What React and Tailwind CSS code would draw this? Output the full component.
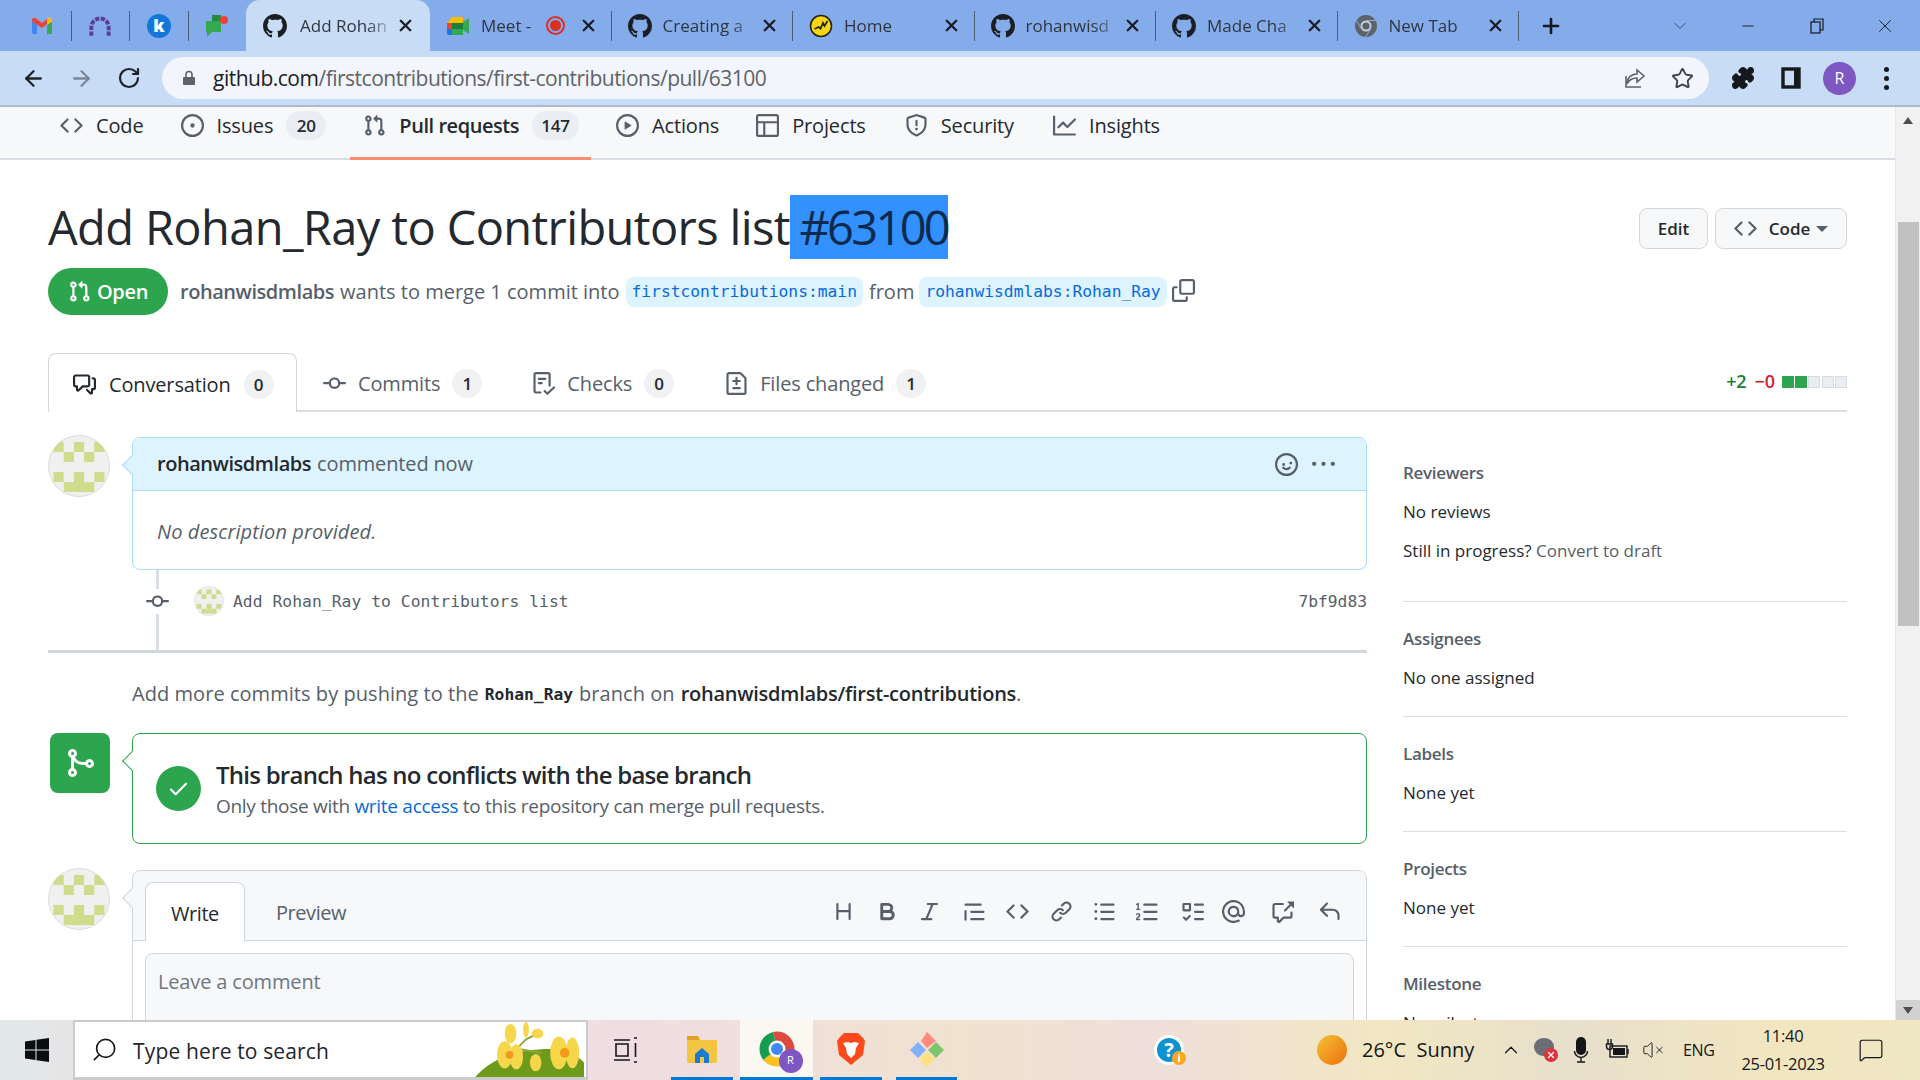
import { ArrowLeft, ArrowRight, RotateCw, Star, X, Plus, Minus, ChevronDown, ChevronUp, Search, Puzzle, VolumeX, MessageSquare } from "lucide-react";

const sans = "font-['Open_Sans',sans-serif]";
const mono = "font-['DejaVu_Sans_Mono',monospace]";

// octicon paths
const ICONS = {
  code: "m11.28 3.22 4.25 4.25a.75.75 0 0 1 0 1.06l-4.25 4.25a.749.749 0 0 1-1.275-.326.749.749 0 0 1 .215-.734L13.94 8l-3.72-3.72a.749.749 0 0 1 .326-1.275.749.749 0 0 1 .734.215Zm-6.56 0a.751.751 0 0 1 1.042.018.751.751 0 0 1 .018 1.042L2.06 8l3.72 3.72a.749.749 0 0 1-.326 1.275.749.749 0 0 1-.734-.215L.47 8.53a.75.75 0 0 1 0-1.06Z",
  issue: "M8 9.5a1.5 1.5 0 1 0 0-3 1.5 1.5 0 0 0 0 3Z M8 0a8 8 0 1 1 0 16A8 8 0 0 1 8 0ZM1.5 8a6.5 6.5 0 1 0 13 0 6.5 6.5 0 0 0-13 0Z",
  pr: "M1.5 3.25a2.25 2.25 0 1 1 3 2.122v5.256a2.251 2.251 0 1 1-1.5 0V5.372A2.25 2.25 0 0 1 1.5 3.25Zm5.677-.177L9.573.677A.25.25 0 0 1 10 .854V2.5h1A2.5 2.5 0 0 1 13.5 5v5.628a2.251 2.251 0 1 1-1.5 0V5a1 1 0 0 0-1-1h-1v1.646a.25.25 0 0 1-.427.177L7.177 3.427a.25.25 0 0 1 0-.354ZM3.75 2.5a.75.75 0 1 0 0 1.5.75.75 0 0 0 0-1.5Zm0 9.5a.75.75 0 1 0 0 1.5.75.75 0 0 0 0-1.5Zm8.25.75a.75.75 0 1 0 1.5 0 .75.75 0 0 0-1.5 0Z",
  play: "M8 0a8 8 0 1 1 0 16A8 8 0 0 1 8 0ZM1.5 8a6.5 6.5 0 1 0 13 0 6.5 6.5 0 0 0-13 0Zm4.879-2.773 4.264 2.559a.25.25 0 0 1 0 .428l-4.264 2.559A.25.25 0 0 1 6 10.559V5.442a.25.25 0 0 1 .379-.215Z",
  table: "M0 1.75C0 .784.784 0 1.75 0h12.5C15.216 0 16 .784 16 1.75v12.5A1.75 1.75 0 0 1 14.25 16H1.75A1.75 1.75 0 0 1 0 14.25ZM6.5 6.5v8h7.75a.25.25 0 0 0 .25-.25V6.5Zm8-1.5V1.75a.25.25 0 0 0-.25-.25H1.75a.25.25 0 0 0-.25.25V5Zm-13 1.5v7.75c0 .138.112.25.25.25H5v-8Z",
  shield: "M7.467.133a1.748 1.748 0 0 1 1.066 0l5.25 1.68A1.75 1.75 0 0 1 15 3.48V7c0 1.566-.32 3.182-1.303 4.682-.983 1.498-2.585 2.813-5.032 3.855a1.697 1.697 0 0 1-1.33 0c-2.447-1.042-4.049-2.357-5.032-3.855C1.32 10.182 1 8.566 1 7V3.48a1.75 1.75 0 0 1 1.217-1.667Zm.61 1.429a.25.25 0 0 0-.153 0l-5.25 1.68a.25.25 0 0 0-.174.238V7c0 1.358.275 2.666 1.057 3.86.784 1.194 2.121 2.34 4.366 3.297a.196.196 0 0 0 .154 0c2.245-.956 3.582-2.104 4.366-3.298C13.225 9.666 13.5 8.36 13.5 7V3.48a.251.251 0 0 0-.174-.237l-5.25-1.68ZM8.75 4.75v3a.75.75 0 0 1-1.5 0v-3a.75.75 0 0 1 1.5 0ZM9 10.5a1 1 0 1 1-2 0 1 1 0 0 1 2 0Z",
  graph: "M1.5 1.75V13.5h13.75a.75.75 0 0 1 0 1.5H.75a.75.75 0 0 1-.75-.75V1.75a.75.75 0 0 1 1.5 0Zm14.28 2.53-5.25 5.25a.75.75 0 0 1-1.06 0L7 7.06 4.28 9.78a.751.751 0 0 1-1.042-.018.751.751 0 0 1-.018-1.042l3.25-3.25a.75.75 0 0 1 1.06 0L10 7.94l4.72-4.72a.751.751 0 0 1 1.042.018.751.751 0 0 1 .018 1.042Z",
  discussion: "M1.75 1h8.5c.966 0 1.75.784 1.75 1.75v5.5A1.75 1.75 0 0 1 10.25 10H7.061l-2.574 2.573A1.458 1.458 0 0 1 2 11.543V10h-.25A1.75 1.75 0 0 1 0 8.25v-5.5C0 1.784.784 1 1.75 1ZM1.5 2.75v5.5c0 .138.112.25.25.25h1a.75.75 0 0 1 .75.75v2.19l2.72-2.72a.749.749 0 0 1 .53-.22h3.5a.25.25 0 0 0 .25-.25v-5.5a.25.25 0 0 0-.25-.25h-8.5a.25.25 0 0 0-.25.25Zm13 2a.25.25 0 0 0-.25-.25h-.5a.75.75 0 0 1 0-1.5h.5c.966 0 1.75.784 1.75 1.75v5.5A1.75 1.75 0 0 1 14.25 12H14v1.543a1.458 1.458 0 0 1-2.487 1.03L9.22 12.28a.749.749 0 0 1 .326-1.275.749.749 0 0 1 .734.215l2.22 2.22v-2.19a.75.75 0 0 1 .75-.75h1a.25.25 0 0 0 .25-.25Z",
  commit: "M11.93 8.5a4.002 4.002 0 0 1-7.86 0H.75a.75.75 0 0 1 0-1.5h3.32a4.002 4.002 0 0 1 7.86 0h3.32a.75.75 0 0 1 0 1.5Zm-1.43-.75a2.5 2.5 0 1 0-5 0 2.5 2.5 0 0 0 5 0Z",
  checklist: "M2.5 1.75v11.5c0 .138.112.25.25.25h3.17a.75.75 0 0 1 0 1.5H2.75A1.75 1.75 0 0 1 1 13.25V1.75C1 .784 1.784 0 2.75 0h8.5C12.216 0 13 .784 13 1.75v7.736a.75.75 0 0 1-1.5 0V1.75a.25.25 0 0 0-.25-.25h-8.5a.25.25 0 0 0-.25.25Zm13.274 9.537v-.001l-4.557 4.45a.75.75 0 0 1-1.055-.008l-1.943-1.95a.75.75 0 0 1 1.062-1.058l1.419 1.425 4.026-3.932a.75.75 0 1 1 1.048 1.074ZM4.75 4h4.5a.75.75 0 0 1 0 1.5h-4.5a.75.75 0 0 1 0-1.5ZM4 7.75A.75.75 0 0 1 4.75 7h2a.75.75 0 0 1 0 1.5h-2A.75.75 0 0 1 4 7.75Z",
  fileDiff: "M1 1.75C1 .784 1.784 0 2.75 0h7.586c.464 0 .909.184 1.237.513l2.914 2.914c.329.328.513.773.513 1.237v9.586A1.75 1.75 0 0 1 13.25 16H2.75A1.75 1.75 0 0 1 1 14.25Zm1.75-.25a.25.25 0 0 0-.25.25v12.5c0 .138.112.25.25.25h10.5a.25.25 0 0 0 .25-.25V4.664a.25.25 0 0 0-.073-.177l-2.914-2.914a.25.25 0 0 0-.177-.073ZM8 3.25a.75.75 0 0 1 .75.75v1.5h1.5a.75.75 0 0 1 0 1.5h-1.5v1.5a.75.75 0 0 1-1.5 0V7h-1.5a.75.75 0 0 1 0-1.5h1.5V4A.75.75 0 0 1 8 3.25Zm-3 8a.75.75 0 0 1 .75-.75h4.5a.75.75 0 0 1 0 1.5h-4.5a.75.75 0 0 1-.75-.75Z",
  copy: "M0 6.75C0 5.784.784 5 1.75 5h1.5a.75.75 0 0 1 0 1.5h-1.5a.25.25 0 0 0-.25.25v7.5c0 .138.112.25.25.25h7.5a.25.25 0 0 0 .25-.25v-1.5a.75.75 0 0 1 1.5 0v1.5A1.75 1.75 0 0 1 9.25 16h-7.5A1.75 1.75 0 0 1 0 14.25Z M5 1.75C5 .784 5.784 0 6.75 0h7.5C15.216 0 16 .784 16 1.75v7.5A1.75 1.75 0 0 1 14.25 11h-7.5A1.75 1.75 0 0 1 5 9.25Zm1.75-.25a.25.25 0 0 0-.25.25v7.5c0 .138.112.25.25.25h7.5a.25.25 0 0 0 .25-.25v-7.5a.25.25 0 0 0-.25-.25Z",
  merge: "M5.45 5.154A4.25 4.25 0 0 0 9.25 7.5h1.378a2.251 2.251 0 1 1 0 1.5H9.25A5.734 5.734 0 0 1 5 7.123v3.505a2.25 2.25 0 1 1-1.5 0V5.372a2.25 2.25 0 1 1 1.95-.218ZM4.25 13.5a.75.75 0 1 0 0-1.5.75.75 0 0 0 0 1.5Zm8.5-4.5a.75.75 0 1 0 0-1.5.75.75 0 0 0 0 1.5ZM5 3.25a.75.75 0 1 0 0 .005V3.25Z",
  check: "M13.78 4.22a.75.75 0 0 1 0 1.06l-7.25 7.25a.75.75 0 0 1-1.06 0L2.22 9.28a.751.751 0 0 1 .018-1.042.751.751 0 0 1 1.042-.018L6 10.94l6.72-6.72a.75.75 0 0 1 1.06 0Z",
  smiley: "M8 0a8 8 0 1 1 0 16A8 8 0 0 1 8 0ZM1.5 8a6.5 6.5 0 1 0 13 0 6.5 6.5 0 0 0-13 0Zm3.82 1.636a.75.75 0 0 1 1.038.175l.007.009c.103.118.22.222.35.31.264.178.683.37 1.285.37.602 0 1.02-.192 1.285-.371.13-.088.247-.192.35-.31l.007-.008a.75.75 0 0 1 1.222.87l-.614-.431c.614.43.614.431.613.431v.001l-.001.002-.002.003-.005.007-.014.019a2.066 2.066 0 0 1-.184.213c-.16.166-.338.316-.53.445-.63.418-1.37.638-2.127.629-.946 0-1.652-.308-2.126-.63a3.331 3.331 0 0 1-.715-.657l-.014-.02-.005-.006-.002-.003v-.002h-.001l.613-.432-.614.43a.75.75 0 0 1 .183-1.044ZM12 7a1 1 0 1 1-2 0 1 1 0 0 1 2 0ZM5 8a1 1 0 1 1 2 0 1 1 0 0 1-2 0Z",
  kebab: "M8 9a1.5 1.5 0 1 0 0-3 1.5 1.5 0 0 0 0 3ZM1.5 9a1.5 1.5 0 1 0 0-3 1.5 1.5 0 0 0 0 3Zm13 0a1.5 1.5 0 1 0 0-3 1.5 1.5 0 0 0 0 3Z",
  github: "M8 0c4.42 0 8 3.58 8 8a8.013 8.013 0 0 1-5.45 7.59c-.4.08-.55-.17-.55-.38 0-.27.01-1.13.01-2.2 0-.75-.25-1.23-.54-1.48 1.78-.2 3.65-.88 3.65-3.95 0-.88-.31-1.59-.82-2.15.08-.2.36-1.02-.08-2.12 0 0-.67-.22-2.2.82-.64-.18-1.32-.27-2-.27-.68 0-1.36.09-2 .27-1.53-1.03-2.2-.82-2.2-.82-.44 1.1-.16 1.92-.08 2.12-.51.56-.82 1.28-.82 2.15 0 3.06 1.86 3.75 3.64 3.95-.23.2-.44.55-.51 1.07-.46.21-1.61.55-2.33-.66-.15-.24-.6-.83-1.23-.82-.67.01-.27.38.01.53.34.19.73.9.82 1.13.16.45.68 1.31 2.69.94 0 .67.01 1.3.01 1.49 0 .21-.15.45-.55.38A7.995 7.995 0 0 1 0 8c0-4.42 3.58-8 8-8Z",
  heading: "M3.75 2a.75.75 0 0 1 .75.75V7h7V2.75a.75.75 0 0 1 1.5 0v10.5a.75.75 0 0 1-1.5 0V8.5h-7v4.75a.75.75 0 0 1-1.5 0V2.75A.75.75 0 0 1 3.75 2Z",
  bold: "M4 2h4.5a3.501 3.501 0 0 1 2.852 5.53A3.499 3.499 0 0 1 9.5 14H4a1 1 0 0 1-1-1V3a1 1 0 0 1 1-1Zm1 7v3h4.5a1.5 1.5 0 0 0 0-3Zm3.5-2a1.5 1.5 0 0 0 0-3H5v3Z",
  italic: "M6 2.75A.75.75 0 0 1 6.75 2h6.5a.75.75 0 0 1 0 1.5h-2.505l-3.858 9H9.25a.75.75 0 0 1 0 1.5h-6.5a.75.75 0 0 1 0-1.5h2.505l3.858-9H6.75A.75.75 0 0 1 6 2.75Z",
  quote: "M1.75 2.5h10.5a.75.75 0 0 1 0 1.5H1.75a.75.75 0 0 1 0-1.5Zm4 5h8.5a.75.75 0 0 1 0 1.5h-8.5a.75.75 0 0 1 0-1.5Zm0 5h8.5a.75.75 0 0 1 0 1.5h-8.5a.75.75 0 0 1 0-1.5ZM2.5 7.75v6a.75.75 0 0 1-1.5 0v-6a.75.75 0 0 1 1.5 0Z",
  link: "m7.775 3.275 1.25-1.25a3.5 3.5 0 1 1 4.95 4.95l-2.5 2.5a3.5 3.5 0 0 1-4.95 0 .751.751 0 0 1 .018-1.042.751.751 0 0 1 1.042-.018 1.998 1.998 0 0 0 2.83 0l2.5-2.5a2.002 2.002 0 0 0-2.83-2.83l-1.25 1.25a.751.751 0 0 1-1.042-.018.751.751 0 0 1-.018-1.042Zm-4.69 9.64a1.998 1.998 0 0 0 2.83 0l1.25-1.25a.751.751 0 0 1 1.042.018.751.751 0 0 1 .018 1.042l-1.25 1.25a3.5 3.5 0 1 1-4.95-4.95l2.5-2.5a3.5 3.5 0 0 1 4.95 0 .751.751 0 0 1-.018 1.042.751.751 0 0 1-1.042.018 1.998 1.998 0 0 0-2.83 0l-2.5 2.5a1.998 1.998 0 0 0 0 2.83Z",
  ul: "M5.75 2.5h8.5a.75.75 0 0 1 0 1.5h-8.5a.75.75 0 0 1 0-1.5Zm0 5h8.5a.75.75 0 0 1 0 1.5h-8.5a.75.75 0 0 1 0-1.5Zm0 5h8.5a.75.75 0 0 1 0 1.5h-8.5a.75.75 0 0 1 0-1.5ZM2 14a1 1 0 1 1 0-2 1 1 0 0 1 0 2Zm1-6a1 1 0 1 1-2 0 1 1 0 0 1 2 0ZM2 4a1 1 0 1 1 0-2 1 1 0 0 1 0 2Z",
  ol: "M5 3.25a.75.75 0 0 1 .75-.75h8.5a.75.75 0 0 1 0 1.5h-8.5A.75.75 0 0 1 5 3.25Zm0 5a.75.75 0 0 1 .75-.75h8.5a.75.75 0 0 1 0 1.5h-8.5A.75.75 0 0 1 5 8.25Zm0 5a.75.75 0 0 1 .75-.75h8.5a.75.75 0 0 1 0 1.5h-8.5a.75.75 0 0 1-.75-.75ZM.924 10.32a.5.5 0 0 1-.851-.525l.001-.001.001-.002.002-.004.007-.011c.097-.144.215-.273.348-.384.228-.19.588-.392 1.068-.392.468 0 .858.181 1.126.484.259.294.377.673.377 1.038 0 .987-.686 1.495-1.156 1.845l-.047.035c-.303.225-.522.4-.654.597h1.357a.5.5 0 0 1 0 1H.5a.5.5 0 0 1-.5-.5c0-1.005.692-1.52 1.167-1.875l.035-.026c.531-.397.8-.64.8-1.078a.568.568 0 0 0-.128-.376C1.806 10.068 1.695 10 1.5 10a.658.658 0 0 0-.429.163.835.835 0 0 0-.144.153ZM2.003 2.5V6h.503a.5.5 0 0 1 0 1H.5a.5.5 0 0 1 0-1h.503V3.308l-.28.14a.5.5 0 0 1-.446-.895l1.003-.5a.5.5 0 0 1 .723.447Z",
  tasklist: "M2 2h4a1 1 0 0 1 1 1v4a1 1 0 0 1-1 1H2a1 1 0 0 1-1-1V3a1 1 0 0 1 1-1Zm4.655 8.595a.75.75 0 0 1 0 1.06L4.03 14.28a.75.75 0 0 1-1.06 0l-1.5-1.5a.749.749 0 0 1 .326-1.275.749.749 0 0 1 .734.215l.97.97 2.095-2.095a.75.75 0 0 1 1.06 0ZM9.75 2.5h5.5a.75.75 0 0 1 0 1.5h-5.5a.75.75 0 0 1 0-1.5Zm0 5h5.5a.75.75 0 0 1 0 1.5h-5.5a.75.75 0 0 1 0-1.5Zm0 5h5.5a.75.75 0 0 1 0 1.5h-5.5a.75.75 0 0 1 0-1.5Zm-7.25-9v3h3v-3Z",
  mention: "M4.75 2.37a6.501 6.501 0 0 0 6.5 11.26.75.75 0 0 1 .75 1.298A7.999 7.999 0 0 1 .989 4.148 8 8 0 0 1 16 7.75v1.5a2.75 2.75 0 0 1-5.072 1.475 3.999 3.999 0 0 1-6.65-4.19A4 4 0 0 1 12 8v1.25a1.25 1.25 0 0 0 2.5 0V7.867a6.5 6.5 0 0 0-9.75-5.496ZM10.5 8a2.5 2.5 0 1 0-5 0 2.5 2.5 0 0 0 5 0Z",
  crossRef: "M2.75 3.5a.25.25 0 0 0-.25.25v7.5c0 .138.112.25.25.25h2a.75.75 0 0 1 .75.75v2.19l2.72-2.72a.749.749 0 0 1 .53-.22h4.5a.25.25 0 0 0 .25-.25v-2.5a.75.75 0 0 1 1.5 0v2.5A1.75 1.75 0 0 1 13.25 13H9.06l-2.573 2.573A1.458 1.458 0 0 1 4 14.543V13H2.75A1.75 1.75 0 0 1 1 11.25v-7.5C1 2.784 1.784 2 2.75 2h5.5a.75.75 0 0 1 0 1.5ZM16 1.25v4.146a.25.25 0 0 1-.427.177L14.03 4.03l-3.75 3.75a.749.749 0 0 1-1.275-.326.749.749 0 0 1 .215-.734l3.75-3.75-1.543-1.543A.25.25 0 0 1 11.604 1h4.146a.25.25 0 0 1 .25.25Z",
  reply: "M6.78 1.97a.75.75 0 0 1 0 1.06L3.81 6h6.44A4.75 4.75 0 0 1 15 10.75v2.5a.75.75 0 0 1-1.5 0v-2.5a3.25 3.25 0 0 0-3.25-3.25H3.81l2.97 2.97a.749.749 0 0 1-.326 1.275.749.749 0 0 1-.734-.215L1.47 7.28a.75.75 0 0 1 0-1.06l4.25-4.25a.75.75 0 0 1 1.06 0Z",
};

const Oct = ({ name, className = "w-[23px] h-[23px] text-[#57606a]" }) => (
  <svg viewBox="0 0 16 16" fill="currentColor" className={`shrink-0 ${className}`}>
    <path d={ICONS[name]} />
  </svg>
);

// identicon avatar, the green squares come from one 5x5 pattern
const CELLS = [[0,0],[2,0],[4,0],[1,1],[3,1],[0,3],[2,3],[4,3],[1,4],[2,4],[3,4]];
const Avatar = ({ className }) => (
  <svg viewBox="0 0 62 62" className={`shrink-0 ${className}`}>
    <defs>
      <clipPath id="av"><circle cx="31" cy="31" r="30.5" /></clipPath>
    </defs>
    <circle cx="31" cy="31" r="30.5" fill="#f0f0f0" stroke="#dcdcdc" />
    <g clipPath="url(#av)" fill="#cfdc8b">
      {CELLS.map(([x, y]) => (
        <rect key={`${x}-${y}`} x={5.5 + x * 10.2} y={7 + y * 10} width="10.2" height="10" />
      ))}
    </g>
  </svg>
);

const GmailIcon = () => (
  <svg viewBox="0 0 24 24" className="w-[24px] h-[24px]">
    <path d="M2 20V7l5 4v9H3.5A1.5 1.5 0 0 1 2 18.5Z" fill="#4285f4" />
    <path d="M22 20V7l-5 4v9h3.5a1.5 1.5 0 0 0 1.5-1.5Z" fill="#34a853" />
    <path d="M2 7.5V6c0-2 2.2-3 3.8-1.8L12 9l6-4.8 1 4.2-7 5.6L2 7.5Z" fill="#ea4335" />
    <path d="M17 11V5l1.2-.9C19.8 3 22 4 22 6v1.5Z" fill="#fbbc04" />
  </svg>
);
const ArcIcon = () => (
  <svg viewBox="0 0 24 24" className="w-[26px] h-[26px]" fill="none" stroke="#5b3d99" strokeWidth="3.6">
    <path d="M4 21v-8a8 8 0 0 1 16 0v8" strokeDasharray="4 1.3" />
  </svg>
);
const KIcon = () => (
  <div className={`w-[24px] h-[24px] rounded-full bg-[#1277d8] flex items-center justify-center text-white text-[17px] font-extrabold leading-none ${sans}`}>k</div>
);
const ChatIcon = () => (
  <svg viewBox="0 0 24 24" className="w-[24px] h-[26px]">
    <path d="M1 7h15v11H7l-5 5v-5H1Z" fill="#34a853" />
    <path d="M7 1h9v6H7Z" fill="#1e8e3e" />
    <circle cx="19" cy="6" r="4" fill="#ea4335" />
  </svg>
);
const MeetIcon = () => (
  <svg viewBox="0 0 24 24" className="w-[24px] h-[24px]">
    <path d="M6 3h11v6H1Z" fill="#fbbc04" />
    <path d="M1 9h5v6H1Z" fill="#ea4335" />
    <path d="M1 15h5v6H3a2 2 0 0 1-2-2Z" fill="#1a73e8" />
    <path d="M6 15h11v6H6Z" fill="#34a853" />
    <path d="M17 8l6-4v16l-6-4Z" fill="#34a853" />
    <path d="M6 9h11v6H6Z" fill="#188038" />
  </svg>
);
const HomeIcon = () => (
  <svg viewBox="0 0 24 24" className="w-[24px] h-[24px]">
    <circle cx="12" cy="12" r="10.5" fill="#f7d810" stroke="#26221a" strokeWidth="1.6" />
    <path d="M5.5 15l4-2 2 1.5L14 9l1.5 3 3-5" fill="none" stroke="#26221a" strokeWidth="1.8" />
  </svg>
);
const ChromeGrey = () => (
  <svg viewBox="0 0 24 24" className="w-[24px] h-[24px]">
    <circle cx="12" cy="12" r="11" fill="#5f6368" />
    <circle cx="12" cy="12" r="5.5" fill="#c5d0e0" />
    <circle cx="12" cy="12" r="3.6" fill="#5f6368" />
    <path d="M12 6.500h10M7.200 14.700 2.500 6.500M16.800 14.700 11.500 23" stroke="#85acea" strokeWidth="1" />
  </svg>
);
const GhIcon = () => <Oct name="github" className="w-[24px] h-[24px] text-[#1b1f23]" />;

const Sep = () => <div className="w-px h-[30px] bg-[#4d5c75] shrink-0" />;

const Pinned = ({ children }) => (
  <>
    <div className="w-[57.5px] h-full flex items-center justify-center shrink-0">{children}</div>
    <Sep />
  </>
);

const Tab = ({ icon, title, extra }) => (
  <>
    <div className={`w-[180.5px] h-full flex items-center pl-[16px] pr-[13px] shrink-0 ${sans}`}>
      <div className="w-[24px] flex justify-center shrink-0">{icon}</div>
      <div className="ml-[11px] flex-1 whitespace-nowrap text-[17px] text-[#2f3540] [mask-image:linear-gradient(90deg,#000_75%,rgba(0,0,0,0.25))]">{title}</div>
      {extra}
      <X className="w-[19px] h-[19px] ml-[8px] text-[#1a1d24] shrink-0" strokeWidth={3} />
    </div>
    <Sep />
  </>
);

const TabStrip = () => (
  <div className="h-[51px] bg-[#85acea] flex items-center pl-[13px]">
    <Pinned><GmailIcon /></Pinned>
    <Pinned><ArcIcon /></Pinned>
    <Pinned><KIcon /></Pinned>
    <div className="w-[57.5px] h-full flex items-center justify-center shrink-0"><ChatIcon /></div>
    <div className={`w-[184px] h-full bg-[#c9dcf6] rounded-t-[14px] flex items-center pl-[17px] pr-[15px] shrink-0 ${sans}`}>
      <GhIcon />
      <div className="ml-[13px] flex-1 whitespace-nowrap text-[17px] text-[#2f3540] [mask-image:linear-gradient(90deg,#000_75%,rgba(0,0,0,0.25))]">Add Rohan</div>
      <X className="w-[19px] h-[19px] ml-[8px] text-[#1a1d24] shrink-0" strokeWidth={3} />
    </div>
    <Tab
      icon={<MeetIcon />}
      title="Meet -"
      extra={<div className="w-[19px] h-[19px] rounded-full border-2 border-[#d93025] flex items-center justify-center shrink-0 mr-[6px]"><div className="w-[11px] h-[11px] rounded-full bg-[#d93025]" /></div>}
    />
    <Tab icon={<GhIcon />} title="Creating a" />
    <Tab icon={<HomeIcon />} title="Home" />
    <Tab icon={<GhIcon />} title="rohanwisd" />
    <Tab icon={<GhIcon />} title="Made Cha" />
    <Tab icon={<ChromeGrey />} title="New Tab" />
    <Plus className="w-[24px] h-[24px] ml-[20px] text-[#14171c]" strokeWidth={2.6} />
    <ChevronDown className="w-[20px] h-[20px] ml-[107px] text-[#2b3a55]" strokeWidth={1} />
    <Minus className="w-[18px] h-[18px] ml-[49px] text-[#14171c]" strokeWidth={1.2} />
    <svg viewBox="0 0 18 18" className="w-[18px] h-[18px] ml-[51px]" fill="none" stroke="#14171c" strokeWidth="1.2">
      <rect x="3" y="5" width="9" height="11" />
      <path d="M6 5V2h9v11h-3" />
    </svg>
    <X className="w-[22px] h-[22px] ml-[48px] text-[#14171c]" strokeWidth={1} />
  </div>
);

const Toolbar = () => (
  <div className="h-[56px] bg-[#c9dcf6] border-b-2 border-[#adb9cc] flex items-start shrink-0">
    <div className="h-[54px] flex items-center pl-[21px]">
      <ArrowLeft className="w-[25px] h-[25px] text-[#1f2329]" strokeWidth={2.2} />
      <ArrowRight className="w-[25px] h-[25px] ml-[23px] text-[#7b8698]" strokeWidth={2.2} />
      <RotateCw className="w-[24px] h-[24px] ml-[23px] text-[#1f2329]" strokeWidth={2.2} />
    </div>
    <div className={`mt-[6px] ml-[21px] w-[1547px] h-[42px] rounded-full bg-[#f2f6fc] flex items-center pl-[19px] ${sans}`}>
      <svg viewBox="0 0 16 16" className="w-[16px] h-[16px] text-[#5f6368]" fill="currentColor">
        <path d="M3 7h10a1 1 0 0 1 1 1v6a1 1 0 0 1-1 1H3a1 1 0 0 1-1-1V8a1 1 0 0 1 1-1Z" />
        <path d="M5 7V4.500a3 3 0 0 1 6 0V7" fill="none" stroke="currentColor" strokeWidth="1.6" />
      </svg>
      <div className="ml-[16px] pt-[1px] text-[21px] text-[#5f6368] tracking-[-0.5px] whitespace-nowrap">
        <span className="text-[#202124]">github.com</span>/firstcontributions/first-contributions/pull/63100
      </div>
      <div className="flex-1" />
      <svg viewBox="0 0 24 24" className="w-[24px] h-[24px]" fill="none" stroke="#5f6368" strokeWidth="1.6">
        <path d="M14 4l7 6-7 6v-4c-5 0-8 2-10 6 0-6 4-10 10-10Z" />
        <path d="M3 10v11h15" />
      </svg>
      <Star className="w-[23px] h-[23px] ml-[24px] mr-[15px] text-[#3f444b]" strokeWidth={2} />
    </div>
    <div className="h-[54px] flex items-center pl-[22px]">
      <Puzzle className="w-[24px] h-[24px] text-[#15181c] fill-[#15181c]" />
      <svg viewBox="0 0 20 22" className="w-[20px] h-[22px] ml-[26px]" fill="none" stroke="#15181c" strokeWidth="3.4">
        <rect x="2" y="2" width="16" height="18" />
        <path d="M15 2v18" strokeWidth="4" />
      </svg>
      <div className={`ml-[22px] w-[33px] h-[33px] rounded-full bg-[#7e57c2] text-white text-[16px] flex items-center justify-center ${sans}`}>R</div>
      <div className="ml-[28px] flex flex-col gap-[4px]">
        <div className="w-[5px] h-[5px] rounded-full bg-[#15181c]" />
        <div className="w-[5px] h-[5px] rounded-full bg-[#15181c]" />
        <div className="w-[5px] h-[5px] rounded-full bg-[#15181c]" />
      </div>
    </div>
  </div>
);

const Counter = ({ children, className = "" }) => (
  <span className={`h-[29px] rounded-full bg-[#eaeef2] text-[#24292f] text-[17px] font-semibold flex items-center justify-center ${className}`}>{children}</span>
);

const NavItem = ({ icon, label, count, active, cw = "w-[40px]", className = "" }) => (
  <div className={`flex items-center gap-[13px] h-[29px] ${className}`}>
    <Oct name={icon} />
    <span className={`text-[20px] whitespace-nowrap ${active ? "font-semibold text-[#24292f] tracking-[-0.45px]" : "text-[#24292f]"}`}>{label}</span>
    {count && <Counter className={cw}>{count}</Counter>}
  </div>
);

const RepoNav = () => (
  <div className="h-[53px] bg-[#f6f8fa] border-b-2 border-[#d8dee4] relative flex items-start pt-[4px] pl-[60px] gap-[37px] shrink-0 tracking-[-0.15px]">
    <NavItem icon="code" label="Code" />
    <NavItem icon="issue" label="Issues" count="20" />
    <NavItem icon="pr" label="Pull requests" count="147" active cw="w-[47px]" />
    <NavItem icon="play" label="Actions" />
    <NavItem icon="table" label="Projects" />
    <NavItem icon="shield" label="Security" className="ml-[2px]" />
    <NavItem icon="graph" label="Insights" className="ml-[2px]" />
    <div className="absolute left-[350px] bottom-[-2px] w-[241px] h-[3px] bg-[#fd8c73]" />
  </div>
);

const Chip = ({ children }) => (
  <span className={`h-[30px] px-[6px] pt-[1px] rounded-[8px] bg-[#ddf4ff] text-[#0969da] text-[16.3px] ${mono} flex items-center`}>{children}</span>
);

const Header = () => (
  <>
    <div className="flex items-start justify-between">
      <h1 className="text-[47px] leading-[66px] text-[#24292f] whitespace-nowrap tracking-[-0.62px]">
        Add Rohan_Ray to Contributors list<span className="bg-[#3390ff] text-[#0d2a4d] tracking-[-2.7px]"> #63100</span>
      </h1>
      <div className="flex gap-[7px] mt-[14px] text-[17px] font-semibold text-[#24292f]">
        <div className="h-[41px] w-[69px] rounded-[8px] border border-[#d5d8db] bg-[#f6f8fa] flex items-center justify-center">Edit</div>
        <div className="h-[41px] w-[132px] rounded-[8px] border border-[#d5d8db] bg-[#f6f8fa] flex items-center justify-center">
          <Oct name="code" />
          <span className="ml-[12px]">Code</span>
          <span className="ml-[6px] w-0 h-0 border-x-[6px] border-x-transparent border-t-[6px] border-t-[#57606a]" />
        </div>
      </div>
    </div>
    <div className="flex items-center mt-[8px] h-[47px] text-[20px] text-[#57606a] whitespace-nowrap">
      <div className="w-[120px] h-[47px] rounded-full bg-[#2da44e] text-white font-semibold flex items-center justify-center gap-[6px] shrink-0 tracking-[-0.3px]">
        <Oct name="pr" className="w-[23px] h-[23px] text-white" />
        Open
      </div>
      <span className="ml-[12px] font-semibold tracking-[-0.45px]">rohanwisdmlabs</span>
      <span className="ml-[6px]">wants to merge 1 commit into</span>
      <span className="ml-[6px]"><Chip>firstcontributions:main</Chip></span>
      <span className="ml-[6px]">from</span>
      <span className="ml-[5px]"><Chip>rohanwisdmlabs:Rohan_Ray</Chip></span>
      <Oct name="copy" className="w-[23px] h-[23px] text-[#57606a] ml-[5px] -mt-[2px]" />
    </div>
  </>
);

const PrTab = ({ icon, label, count, className = "" }) => (
  <div className={`flex items-center h-full pt-[4px] ${className}`}>
    <Oct name={icon} />
    <span className="ml-[12px] text-[20px] text-[#57606a]">{label}</span>
    <Counter className="ml-[12px] w-[30px] font-normal !bg-[#eff1f3]">{count}</Counter>
  </div>
);

const PrTabs = () => (
  <div className="mt-[38px] h-[59px] border-b-2 border-[#d8dee4] flex items-end tracking-[-0.15px]">
    <div className="w-[249px] h-[59px] -mb-[2px] bg-white border border-b-0 border-[#d0d7de] rounded-t-[8px] flex items-center pl-[24px] pt-[3px]">
      <Oct name="discussion" className="w-[23px] h-[23px] text-[#24292f]" />
      <span className="ml-[13px] text-[20px] text-[#24292f]">Conversation</span>
      <Counter className="ml-[13px] w-[30px] font-normal !bg-[#eff1f3]">0</Counter>
    </div>
    <PrTab icon="commit" label="Commits" count="1" className="ml-[26px]" />
    <PrTab icon="checklist" label="Checks" count="0" className="ml-[50px]" />
    <PrTab icon="fileDiff" label="Files changed" count="1" className="ml-[51px]" />
    <div className="ml-auto h-full flex items-center text-[18px] font-semibold">
      <span className="text-[#1a7f37]">+2</span>
      <span className="ml-[8px] text-[#cf222e]">−0</span>
      <div className="ml-[7px] flex gap-[1.3px]">
        <div className="w-[12px] h-[12px] bg-[#2da44e]" />
        <div className="w-[12px] h-[12px] bg-[#2da44e]" />
        <div className="w-[12px] h-[12px] bg-[#eaeef2] border border-[#d8dcdf]" />
        <div className="w-[12px] h-[12px] bg-[#eaeef2] border border-[#d8dcdf]" />
        <div className="w-[12px] h-[12px] bg-[#eaeef2] border border-[#d8dcdf]" />
      </div>
    </div>
  </div>
);

// small pointer on the left edge of a box
const Pointer = ({ bg, border, top = "top-[20px]" }) => (
  <div className={`absolute left-[-8px] ${top} w-[14px] h-[14px] rotate-45 border-l border-b ${bg} ${border}`} />
);

const Comment = () => (
  <>
    <div className="flex items-start mt-[25px]">
      <Avatar className="w-[62px] h-[62px] -mt-[2px]" />
      <div className="relative ml-[22px] flex-1 rounded-[8px] border border-[#a8dcff] bg-white">
        <Pointer bg="bg-[#ddf4ff]" border="border-[#a8dcff]" />
        <div className="relative h-[53px] bg-[#ddf4ff] rounded-t-[8px] border-b border-[#a8dcff] flex items-center pl-[24px] pr-[31px] text-[20px]">
          <span className="font-semibold text-[#24292f] tracking-[-0.45px]">rohanwisdmlabs</span>
          <span className="ml-[6px] text-[#57606a] tracking-[-0.15px]">commented now</span>
          <Oct name="smiley" className="w-[23px] h-[23px] text-[#57606a] ml-auto" />
          <Oct name="kebab" className="w-[23px] h-[23px] text-[#57606a] ml-[14px]" />
        </div>
        <div className="h-[78px] flex items-center pl-[24px] pt-[3px] text-[20px] italic text-[#57606a] tracking-[0.1px]">No description provided.</div>
      </div>
    </div>
    <div className="ml-[108px] w-[3px] h-[80px] bg-[#d8dee4] relative">
      <div className="absolute top-[19px] left-[-12px] w-[27px] h-[25px] bg-white flex items-center justify-center">
        <Oct name="commit" className="w-[23px] h-[23px] text-[#57606a]" />
      </div>
    </div>
    <div className="-mt-[64px] mb-[34px] h-[30px] pl-[146px] flex items-center">
      <Avatar className="w-[30px] h-[30px]" />
      <span className={`ml-[9px] pt-[2px] text-[16.3px] text-[#57606a] tracking-[0.07px] ${mono}`}>Add Rohan_Ray to Contributors list</span>
      <span className={`ml-auto pt-[2px] text-[16.3px] text-[#57606a] ${mono}`}>7bf9d83</span>
    </div>
    <div className="h-[3px] bg-[#d0d7de]" />
  </>
);

const MergeBox = () => (
  <>
    <div className="mt-[27px] ml-[84px] h-[28px] flex items-center text-[20px] text-[#57606a] tracking-[0.05px] whitespace-nowrap">
      Add more commits by pushing to the
      <span className={`mx-[6px] pt-[2px] ${mono} text-[16.3px] font-bold text-[#24292f] tracking-normal`}>Rohan_Ray</span>
      branch on
      <span className="ml-[6px] font-semibold text-[#24292f] tracking-[-0.25px]">rohanwisdmlabs/first-contributions</span>.
    </div>
    <div className="mt-[25px] flex items-start">
      <div className="ml-[2px] w-[60px] h-[60px] rounded-[8px] bg-[#2da44e] flex items-center justify-center shrink-0">
        <Oct name="merge" className="w-[32px] h-[32px] text-white" />
      </div>
      <div className="relative ml-[22px] flex-1 h-[111px] rounded-[8px] border border-[#2da44e] bg-white flex items-center pl-[23px]">
        <Pointer bg="bg-white" border="border-[#2da44e]" />
        <div className="relative w-[45px] h-[45px] rounded-full bg-[#2da44e] flex items-center justify-center shrink-0">
          <Oct name="check" className="w-[23px] h-[23px] text-white" />
        </div>
        <div className="relative ml-[15px] pt-[3px]">
          <div className="text-[24px] leading-[32px] font-semibold text-[#24292f] tracking-[-0.75px]">This branch has no conflicts with the base branch</div>
          <div className="text-[19px] leading-[30px] text-[#57606a] tracking-[-0.29px]">
            Only those with <span className="text-[#0969da]">write access</span> to this repository can merge pull requests.
          </div>
        </div>
      </div>
    </div>
  </>
);

const TOOLS = [
  ["heading", ""], ["bold", "ml-[21px]"], ["italic", "ml-[19px]"], ["quote", "ml-[22px]"], ["code", "ml-[20px]"], ["link", "ml-[21px]"],
  ["ul", "ml-[20px]"], ["ol", "ml-[20px]"], ["tasklist", "ml-[22px]"], ["mention", "ml-[18px]"], ["crossRef", "ml-[26px]"], ["reply", "ml-[24px]"],
];

const Composer = () => (
  <div className="mt-[26px] flex items-start">
    <Avatar className="w-[62px] h-[62px] -mt-[2px] shrink-0" />
    <div className="relative ml-[22px] flex-1 rounded-t-[8px] border border-[#d0d7de] bg-white h-[300px]">
      <Pointer bg="bg-[#f6f8fa]" border="border-[#d0d7de]" />
      <div className="relative h-[70px] bg-[#f6f8fa] rounded-t-[8px] border-b border-[#d0d7de] flex items-end pl-[12px] pr-[25px] text-[20px] tracking-[-0.45px]">
        <div className="w-[100px] h-[59px] -mb-px pt-[4px] bg-white border border-b-0 border-[#d0d7de] rounded-t-[8px] flex items-center justify-center text-[#24292f]">Write</div>
        <div className="ml-[31px] h-[59px] pt-[4px] flex items-center text-[#57606a]">Preview</div>
        <div className="ml-auto h-[70px] flex items-center pt-[13px] pb-[13px] translate-y-[6px]">
          {TOOLS.map(([name, ml]) => (
            <Oct key={name} name={name} className={`w-[23px] h-[23px] text-[#57606a] ${ml}`} />
          ))}
        </div>
      </div>
      <div className="mt-[12px] mx-[12px] h-[200px] rounded-t-[8px] border border-[#d0d7de] bg-[#f6f8fa] pl-[12px] pt-[13px] text-[20px] text-[#6e7781] tracking-[-0.15px]">Leave a comment</div>
    </div>
  </div>
);

const SideSection = ({ title, children, last }) => (
  <div className={`${last ? "" : "border-b border-[#d8dee4]"}`}>
    <div className="pt-[25px] text-[17px] leading-[24px] font-semibold text-[#57606a] tracking-[-0.3px]">{title}</div>
    <div className={`pt-[15px] text-[17px] leading-[24px] text-[#24292f] ${last ? "" : "pb-[26px]"}`}>{children}</div>
  </div>
);

const Sidebar = () => (
  <aside className="w-[444px] ml-[36px] shrink-0 pt-[48px]">
    <div className="border-b border-[#d8dee4]">
      <div className="pt-[1px] text-[17px] leading-[24px] font-semibold text-[#57606a] tracking-[-0.3px]">Reviewers</div>
      <div className="pt-[15px] text-[17px] leading-[24px] text-[#24292f]">No reviews</div>
      <div className="pt-[15px] pb-[38px] text-[17px] leading-[24px] text-[#24292f]">
        Still in progress? <span className="text-[#57606a]">Convert to draft</span>
      </div>
    </div>
    <SideSection title="Assignees">No one assigned</SideSection>
    <SideSection title="Labels">None yet</SideSection>
    <SideSection title="Projects">None yet</SideSection>
    <SideSection title="Milestone" last>No milestone</SideSection>
  </aside>
);

const Scrollbar = () => (
  <div className="w-[25px] bg-[#f1f1f1] flex flex-col items-center border-l border-[#e8e8e8] shrink-0">
    <div className="h-[26px] flex items-center justify-center shrink-0">
      <div className="w-0 h-0 border-x-[5px] border-x-transparent border-b-[7px] border-b-[#505050]" />
    </div>
    <div className="w-[21px] h-[404px] mt-[89px] bg-[#c1c1c1] shrink-0" />
    <div className="mt-auto w-full h-[20px] bg-[#d2d2d2] flex items-center justify-center shrink-0">
      <div className="w-0 h-0 border-x-[5px] border-x-transparent border-t-[7px] border-t-[#505050]" />
    </div>
  </div>
);

const Flower = () => (
  <svg viewBox="0 0 120 60" className="absolute right-0 top-0 w-[120px] h-[58px]">
    <path d="M5 60C22 38 50 28 85 28c15 0 28 6 35 14v18Z" fill="#6d9a1b" />
    <path d="M60 18 40 38M60 18l16-8M52 28l24 4" stroke="#8aa83a" strokeWidth="2" fill="none" />
    <g fill="#f6d64a">
      <ellipse cx="44" cy="12" rx="6" ry="10" />
      <ellipse cx="60" cy="8" rx="3" ry="8" />
      <ellipse cx="72" cy="12" rx="6" ry="5" />
      <ellipse cx="38" cy="34" rx="8" ry="14" />
      <ellipse cx="50" cy="36" rx="7" ry="13" />
      <ellipse cx="70" cy="42" rx="6" ry="9" />
      <ellipse cx="94" cy="32" rx="9" ry="17" />
      <ellipse cx="108" cy="32" rx="7" ry="16" />
    </g>
    <circle cx="43" cy="34" r="4" fill="#ef9a1a" />
    <circle cx="100" cy="32" r="5" fill="#ef9a1a" />
  </svg>
);

const TaskCell = ({ className = "", children }) => (
  <div className={`h-full flex items-center justify-center border-b-[3px] shrink-0 ${className}`}>{children}</div>
);

const Taskbar = () => (
  <div className={`h-[60px] shrink-0 flex items-center bg-[linear-gradient(90deg,#e1e9e8_0%,#e6e4e6_4%,#f0dde2_33%,#f0e2cf_50%,#eedfdb_60%,#f1e7c2_72%,#e8dfcc_82%,#f1e6c0_92%,#efe6c2_100%)] text-[#14161a] ${sans}`}>
    <div className="w-[73px] h-full flex items-center justify-center shrink-0">
      <svg viewBox="0 0 24 24" className="w-[24px] h-[24px]" fill="#0c0d10">
        <path d="M0 3.400 10.500 2v9.500H0ZM11.500 1.800 24 0v11.500H11.500ZM0 12.500h10.500V22L0 20.600ZM11.500 12.500H24V24l-12.500-1.800Z" />
      </svg>
    </div>
    <div className="relative w-[515px] h-full border-2 border-[#cbcbcb] border-b-[3px] bg-white flex items-center pl-[16px] shrink-0 overflow-hidden">
      <Search className="w-[27px] h-[27px] -scale-x-100 text-[#15181c]" strokeWidth={1.5} />
      <span className="ml-[15px] pt-[5px] text-[21px] tracking-[0.15px] text-[#23262b]">Type here to search</span>
      <Flower />
    </div>
    <div className="w-[83px] h-full flex items-center justify-center pr-[8px] shrink-0">
      <svg viewBox="0 0 26 26" className="w-[26px] h-[26px]" fill="none" stroke="#14161a" strokeWidth="1.6">
        <path d="M1 3h16M1 23h16M3 7h12v12H3ZM21 1h3M21 25h3M22.500 6v14" />
      </svg>
    </div>
    <TaskCell className="w-[62px] border-[#0078d4]">
      <svg viewBox="0 0 32 32" className="w-[32px] h-[32px]">
        <path d="M1 3h11l3 4h16v22a1 1 0 0 1-1 1H2a1 1 0 0 1-1-1Z" fill="#f4c542" />
        <path d="M1 3h11l1 4H1Z" fill="#e0a020" />
        <path d="M9 21l7-6 7 6v9h-5v-6h-4v6H9Z" fill="#1a7bd0" />
      </svg>
    </TaskCell>
    <TaskCell className="ml-[7px] w-[73px] bg-[#fbf7f1] border-[#0078d4]">
      <div className="relative w-[36px] h-[36px]">
        <svg viewBox="0 0 36 36" className="w-[36px] h-[36px]">
          <circle cx="18" cy="18" r="13" fill="none" stroke="#dd4b3e" strokeWidth="9" strokeDasharray="28 54" strokeDashoffset="-58" />
          <circle cx="18" cy="18" r="13" fill="none" stroke="#179c52" strokeWidth="9" strokeDasharray="28 54" strokeDashoffset="-30" />
          <circle cx="18" cy="18" r="13" fill="none" stroke="#f7c324" strokeWidth="9" strokeDasharray="28 54" strokeDashoffset="-4" />
          <circle cx="18" cy="18" r="7" fill="#4285f4" stroke="#fff" strokeWidth="2" />
        </svg>
        <div className="absolute right-[-8px] bottom-[-6px] w-[24px] h-[24px] rounded-full bg-[#7e57c2] text-white text-[11px] flex items-center justify-center">R</div>
      </div>
    </TaskCell>
    <TaskCell className="ml-[7px] w-[62px] border-[#0078d4]">
      <svg viewBox="0 0 30 34" className="w-[30px] h-[36px]">
        <path d="M8 1h14l5 5 2 3-2 14-12 10L3 23 1 9l2-3Z" fill="#fb4a1b" />
        <path d="M7 11l5-1 3 1 3-1 5 1-3 5-1 6-4 4-4-4-1-6Z" fill="#fff" />
      </svg>
    </TaskCell>
    <TaskCell className="ml-[14px] w-[61px] border-[#0078d4]">
      <svg viewBox="0 0 36 36" className="w-[36px] h-[36px]">
        <path d="M18 1l9 9-9 7-6-7Z" fill="#ff8a80" />
        <path d="M9 11l8 8-8 8-8-8Z" fill="#82b1ff" />
        <path d="M27 11l8 8-8 8-8-8Z" fill="#7cc56a" />
        <path d="M18 21l8 7-8 8-8-8Z" fill="#ffe082" />
      </svg>
    </TaskCell>
    <div className="ml-[197px] relative w-[30px] h-[30px] rounded-full bg-[#0f92d1] border-[3px] border-white flex items-center justify-center text-white text-[20px] font-bold shrink-0">
      ?
      <div className="absolute -right-[5px] -bottom-[3px] w-[14px] h-[14px] rounded-full bg-[#f5a921] text-white text-[10px] flex items-center justify-center">i</div>
    </div>
    <div className="ml-[133px] w-[30px] h-[30px] rounded-full bg-[linear-gradient(135deg,#f3c233,#ee6f0e)] shrink-0" />
    <div className="ml-[15px] w-[113px] text-[20px] tracking-[0px] whitespace-pre shrink-0">26°C  Sunny</div>
    <ChevronUp className="ml-[25px] w-[22px] h-[22px] shrink-0" strokeWidth={1.3} />
    <div className="ml-[12px] relative w-[24px] h-[24px] shrink-0">
      <div className="w-[20px] h-[18px] rounded-full bg-[#6b6f75]" />
      <div className="absolute right-0 bottom-0 w-[14px] h-[14px] rounded-full bg-[#e0323c] text-white flex items-center justify-center">
        <X className="w-[10px] h-[10px]" strokeWidth={3} />
      </div>
    </div>
    <svg viewBox="0 0 16 26" className="ml-[15px] w-[16px] h-[26px] shrink-0" fill="#14161a">
      <rect x="3" y="0" width="10" height="18" rx="5" />
      <path d="M1.500 14a6.500 6.500 0 0 0 13 0M8 20v5M4 25h8" fill="none" stroke="#14161a" strokeWidth="1.4" />
    </svg>
    <svg viewBox="0 0 24 24" className="ml-[16px] w-[24px] h-[24px] shrink-0" fill="none" stroke="#14161a" strokeWidth="1.4">
      <rect x="5" y="8" width="17" height="11" />
      <rect x="8" y="10" width="12" height="7" fill="#14161a" stroke="none" />
      <path d="M23 11v5M3 1v5M6 1v5M1.500 6h6v2.500a3 3 0 0 1-6 0Z" />
    </svg>
    <VolumeX className="ml-[13px] w-[22px] h-[22px] shrink-0" strokeWidth={1} />
    <div className="ml-[19px] w-[33px] text-[16px] tracking-[-0.4px] shrink-0">ENG</div>
    <div className="ml-[17px] w-[100px] text-center text-[16.5px] leading-[28px] tracking-[-0.3px] shrink-0">
      <div>11:40</div>
      <div>25-01-2023</div>
    </div>
    <MessageSquare className="ml-[25px] w-[26px] h-[28px] shrink-0" strokeWidth={1.1} />
  </div>
);

export default function App() {
  return (
    <div className={`h-screen w-screen overflow-hidden flex flex-col ${sans}`}>
      <TabStrip />
      <Toolbar />
      <div className="flex-1 min-h-0 flex">
        <main className="flex-1 min-w-0 bg-white overflow-hidden flex flex-col">
          <RepoNav />
          <div className="px-[48px] pt-[34px]">
            <Header />
            <PrTabs />
            <div className="flex items-start">
              <div className="w-[1319px] shrink-0">
                <Comment />
                <MergeBox />
                <Composer />
              </div>
              <Sidebar />
            </div>
          </div>
        </main>
        <Scrollbar />
      </div>
      <Taskbar />
    </div>
  );
}
